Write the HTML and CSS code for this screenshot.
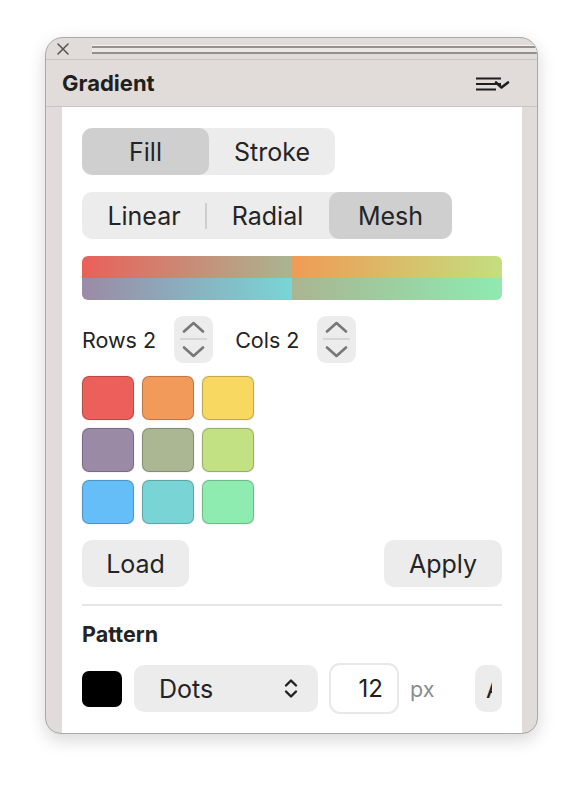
FILE: index.html
```html
<!DOCTYPE html>
<html lang="en">
<head>
    <meta charset="UTF-8">
    <meta name="viewport" content="width=device-width, initial-scale=1.0">
    <title>Gradient</title>
    <link rel="stylesheet" href="styles.css">
</head>
<body>
    <div class="panel">
        <div class="titlebar">
            <svg class="close" width="12" height="12" viewBox="0 0 12 12">
                <path d="M1 1 L11 11 M11 1 L1 11" stroke="#5a5654" stroke-width="1.6" stroke-linecap="round"/>
            </svg>
            <div class="grip"></div>
        </div>

        <div class="header">
            <h1>Gradient</h1>
            <svg class="menu" width="34" height="14" viewBox="0 0 34 14">
                <path d="M0 1.5 H25 M0 7 H25 M0 12.5 H20" stroke="#1e1e1e" stroke-width="1.8"/>
                <path d="M20 5.5 L25.5 10.5 L32 5.5" stroke="#1e1e1e" stroke-width="2.6" fill="none" stroke-linecap="round" stroke-linejoin="round"/>
            </svg>
        </div>

        <div class="body">
            <div class="content">
                <div class="seg seg-fill">
                    <button class="on">Fill</button>
                    <button>Stroke</button>
                </div>

                <div class="seg seg-type">
                    <button>Linear</button>
                    <span class="sep"></span>
                    <button>Radial</button>
                    <button class="on">Mesh</button>
                </div>

                <div class="mesh">
                    <div class="cell c1"></div>
                    <div class="cell c2"></div>
                    <div class="cell c3"></div>
                    <div class="cell c4"></div>
                </div>

                <div class="dims">
                    <span class="dim-label">Rows 2</span>
                    <div class="stepper">
                        <svg width="23" height="12" viewBox="0 0 23 12"><path d="M2 10.5 L11.5 2 L21 10.5" stroke="#777" stroke-width="2.6" fill="none" stroke-linecap="round" stroke-linejoin="round"/></svg>
                        <span class="stepper-line"></span>
                        <svg width="23" height="12" viewBox="0 0 23 12"><path d="M2 1.5 L11.5 10 L21 1.5" stroke="#777" stroke-width="2.6" fill="none" stroke-linecap="round" stroke-linejoin="round"/></svg>
                    </div>
                    <span class="dim-label">Cols 2</span>
                    <div class="stepper">
                        <svg width="23" height="12" viewBox="0 0 23 12"><path d="M2 10.5 L11.5 2 L21 10.5" stroke="#777" stroke-width="2.6" fill="none" stroke-linecap="round" stroke-linejoin="round"/></svg>
                        <span class="stepper-line"></span>
                        <svg width="23" height="12" viewBox="0 0 23 12"><path d="M2 1.5 L11.5 10 L21 1.5" stroke="#777" stroke-width="2.6" fill="none" stroke-linecap="round" stroke-linejoin="round"/></svg>
                    </div>
                </div>

                <div class="swatches">
                    <div class="swatch red"></div>
                    <div class="swatch orange"></div>
                    <div class="swatch yellow"></div>
                    <div class="swatch purple"></div>
                    <div class="swatch sage"></div>
                    <div class="swatch lime"></div>
                    <div class="swatch blue"></div>
                    <div class="swatch teal"></div>
                    <div class="swatch mint"></div>
                </div>

                <div class="actions">
                    <button class="btn btn-load">Load</button>
                    <button class="btn btn-apply">Apply</button>
                </div>

                <div class="divider"></div>

                <h2>Pattern</h2>

                <div class="pattern-row">
                    <div class="color-well"></div>
                    <div class="select">
                        <span>Dots</span>
                        <svg width="16" height="21" viewBox="0 0 16 21"><path d="M3 7.5 L8 2.5 L13 7.5 M3 13.5 L8 18.5 L13 13.5" stroke="#222" stroke-width="2.4" fill="none" stroke-linecap="round" stroke-linejoin="round"/></svg>
                    </div>
                    <div class="num">12</div>
                    <span class="unit">px</span>
                    <button class="btn btn-more"><span>Auto</span></button>
                </div>
            </div>
        </div>
    </div>
</body>
</html>
```

FILE: styles.css
```css
* {
    box-sizing: border-box;
    margin: 0;
    padding: 0;
    font-family: 'Inter', 'Liberation Sans', sans-serif;
}

body {
    background-color: #ffffff;
    color: #232323;
    padding-bottom: 54px;
}

.panel {
    width: 493px;
    height: 697px;
    margin: 37px 0 0 45px;
    border: 1px solid #aca8a5;
    border-radius: 18px 18px 16px 16px;
    background-color: #e1dcd9;
    overflow: hidden;
    box-shadow: 0 6px 18px rgba(0, 0, 0, 0.16);
    display: flex;
    flex-direction: column;
}

.titlebar {
    height: 22px;
    border-bottom: 1px solid #c9c4c1;
    display: flex;
    align-items: center;
    padding-left: 11px;
    flex-shrink: 0;
}

.close {
    display: block;
    margin-right: 23px;
}

.grip {
    flex: 1;
    height: 8px;
    margin-top: 2px;
    border-top: 2px solid #94908d;
    border-bottom: 2px solid #94908d;
    background-color: #ebe7e5;
    box-shadow: 0 -1px 0 #f4f1ef;
}

.header {
    height: 47px;
    border-bottom: 1px solid #c9c4c1;
    display: flex;
    align-items: center;
    justify-content: space-between;
    padding: 0 27px 0 16px;
    flex-shrink: 0;
}

.header h1 {
    font-size: 22px;
    font-weight: 700;
    color: #1f1f1f;
}

.menu {
    display: block;
    margin-top: 1px;
}

.body {
    flex: 1;
    padding: 0 15px 0 16px;
    min-height: 0;
}

.content {
    background-color: #ffffff;
    height: 100%;
    padding: 21px 20px 0 20px;
    overflow: hidden;
}

button {
    border: none;
    background: none;
    font-family: inherit;
    color: inherit;
    cursor: pointer;
}

.seg {
    display: inline-flex;
    align-items: center;
    height: 47px;
    background-color: #ececec;
    border-radius: 10px;
}

.seg button {
    height: 47px;
    font-size: 25px;
    color: #242424;
    border-radius: 10px;
}

.seg button.on {
    background-color: #cfcfcf;
}

.seg-fill button {
    width: 127px;
}

.seg-fill button + button {
    width: 126px;
}

.seg-type {
    margin-top: 17px;
}

.seg-type button {
    width: 123px;
}

.seg-type button:first-child {
    width: 124px;
}

.seg-type .sep {
    width: 2px;
    height: 26px;
    margin: 0 -1px;
    background-color: #cdcdcd;
}

.mesh {
    margin-top: 17px;
    height: 44px;
    border-radius: 6px;
    overflow: hidden;
    display: grid;
    grid-template-columns: 210px 1fr;
    grid-template-rows: 22px 22px;
}

.c1 { background: linear-gradient(90deg, #ea605a, #aab591); }
.c2 { background: linear-gradient(90deg, #f09b55, #c3df7f); }
.c3 { background: linear-gradient(90deg, #9c8aa6, #78d5d6); }
.c4 { background: linear-gradient(90deg, #aab591, #8eeab1); }

.dims {
    margin-top: 16px;
    display: flex;
    align-items: center;
}

.dim-label {
    font-size: 21.5px;
    color: #232323;
    margin-right: 18px;
}

.stepper {
    width: 39px;
    height: 47px;
    background-color: #ececec;
    border-radius: 9px;
    display: flex;
    flex-direction: column;
    align-items: center;
    padding-top: 5px;
    margin-right: 22px;
}

.stepper svg {
    display: block;
}

.stepper-line {
    width: 27px;
    height: 2px;
    background-color: #d6d6d6;
    margin: 5px 0 6px;
}

.swatches {
    margin-top: 13px;
    display: grid;
    grid-template-columns: repeat(3, 52px);
    grid-auto-rows: 44px;
    gap: 8px;
}

.swatch {
    border-radius: 7px;
    border: 1px solid rgba(0, 0, 0, 0.22);
    box-shadow: 0 0 0 1px rgba(0, 0, 0, 0.04);
}

.red { background-color: #ec5f5a; }
.orange { background-color: #f29a5a; }
.yellow { background-color: #f8d860; }
.purple { background-color: #9b8aa6; }
.sage { background-color: #aab792; }
.lime { background-color: #c1e182; }
.blue { background-color: #66bef8; }
.teal { background-color: #79d5d5; }
.mint { background-color: #8fecb1; }

.actions {
    margin-top: 16px;
    display: flex;
    justify-content: space-between;
}

.btn {
    height: 47px;
    background-color: #ececec;
    border-radius: 10px;
    font-size: 25px;
    color: #242424;
}

.btn-load {
    width: 107px;
}

.btn-apply {
    width: 118px;
}

.divider {
    margin-top: 17px;
    height: 2px;
    background-color: #e6e6e6;
}

.content h2 {
    margin-top: 16px;
    font-size: 21.5px;
    font-weight: 700;
    line-height: 24px;
    color: #232323;
}

.pattern-row {
    margin-top: 17px;
    display: flex;
    align-items: center;
    gap: 11px;
}

.color-well {
    width: 40px;
    height: 36px;
    flex-shrink: 0;
    background-color: #000000;
    border-radius: 7px;
    margin-right: 1px;
}

.select {
    width: 184px;
    height: 47px;
    flex-shrink: 0;
    background-color: #ececec;
    border-radius: 10px;
    display: flex;
    align-items: center;
    justify-content: space-between;
    padding: 0 19px 0 25px;
    font-size: 25px;
    color: #242424;
}

.select svg {
    display: block;
}

.num {
    width: 70px;
    height: 51px;
    flex-shrink: 0;
    border: 2px solid #e8e8e8;
    border-radius: 11px;
    display: flex;
    align-items: center;
    justify-content: flex-end;
    padding-right: 14px;
    font-size: 24px;
    color: #202020;
}

.unit {
    width: 54px;
    flex-shrink: 0;
    font-size: 21.5px;
    color: #8c8c8c;
}

.btn-more {
    flex: 1;
    min-width: 0;
    padding: 0 10px 0 11px;
    text-align: left;
}

.btn-more span {
    display: block;
    overflow: hidden;
    white-space: nowrap;
}
```
